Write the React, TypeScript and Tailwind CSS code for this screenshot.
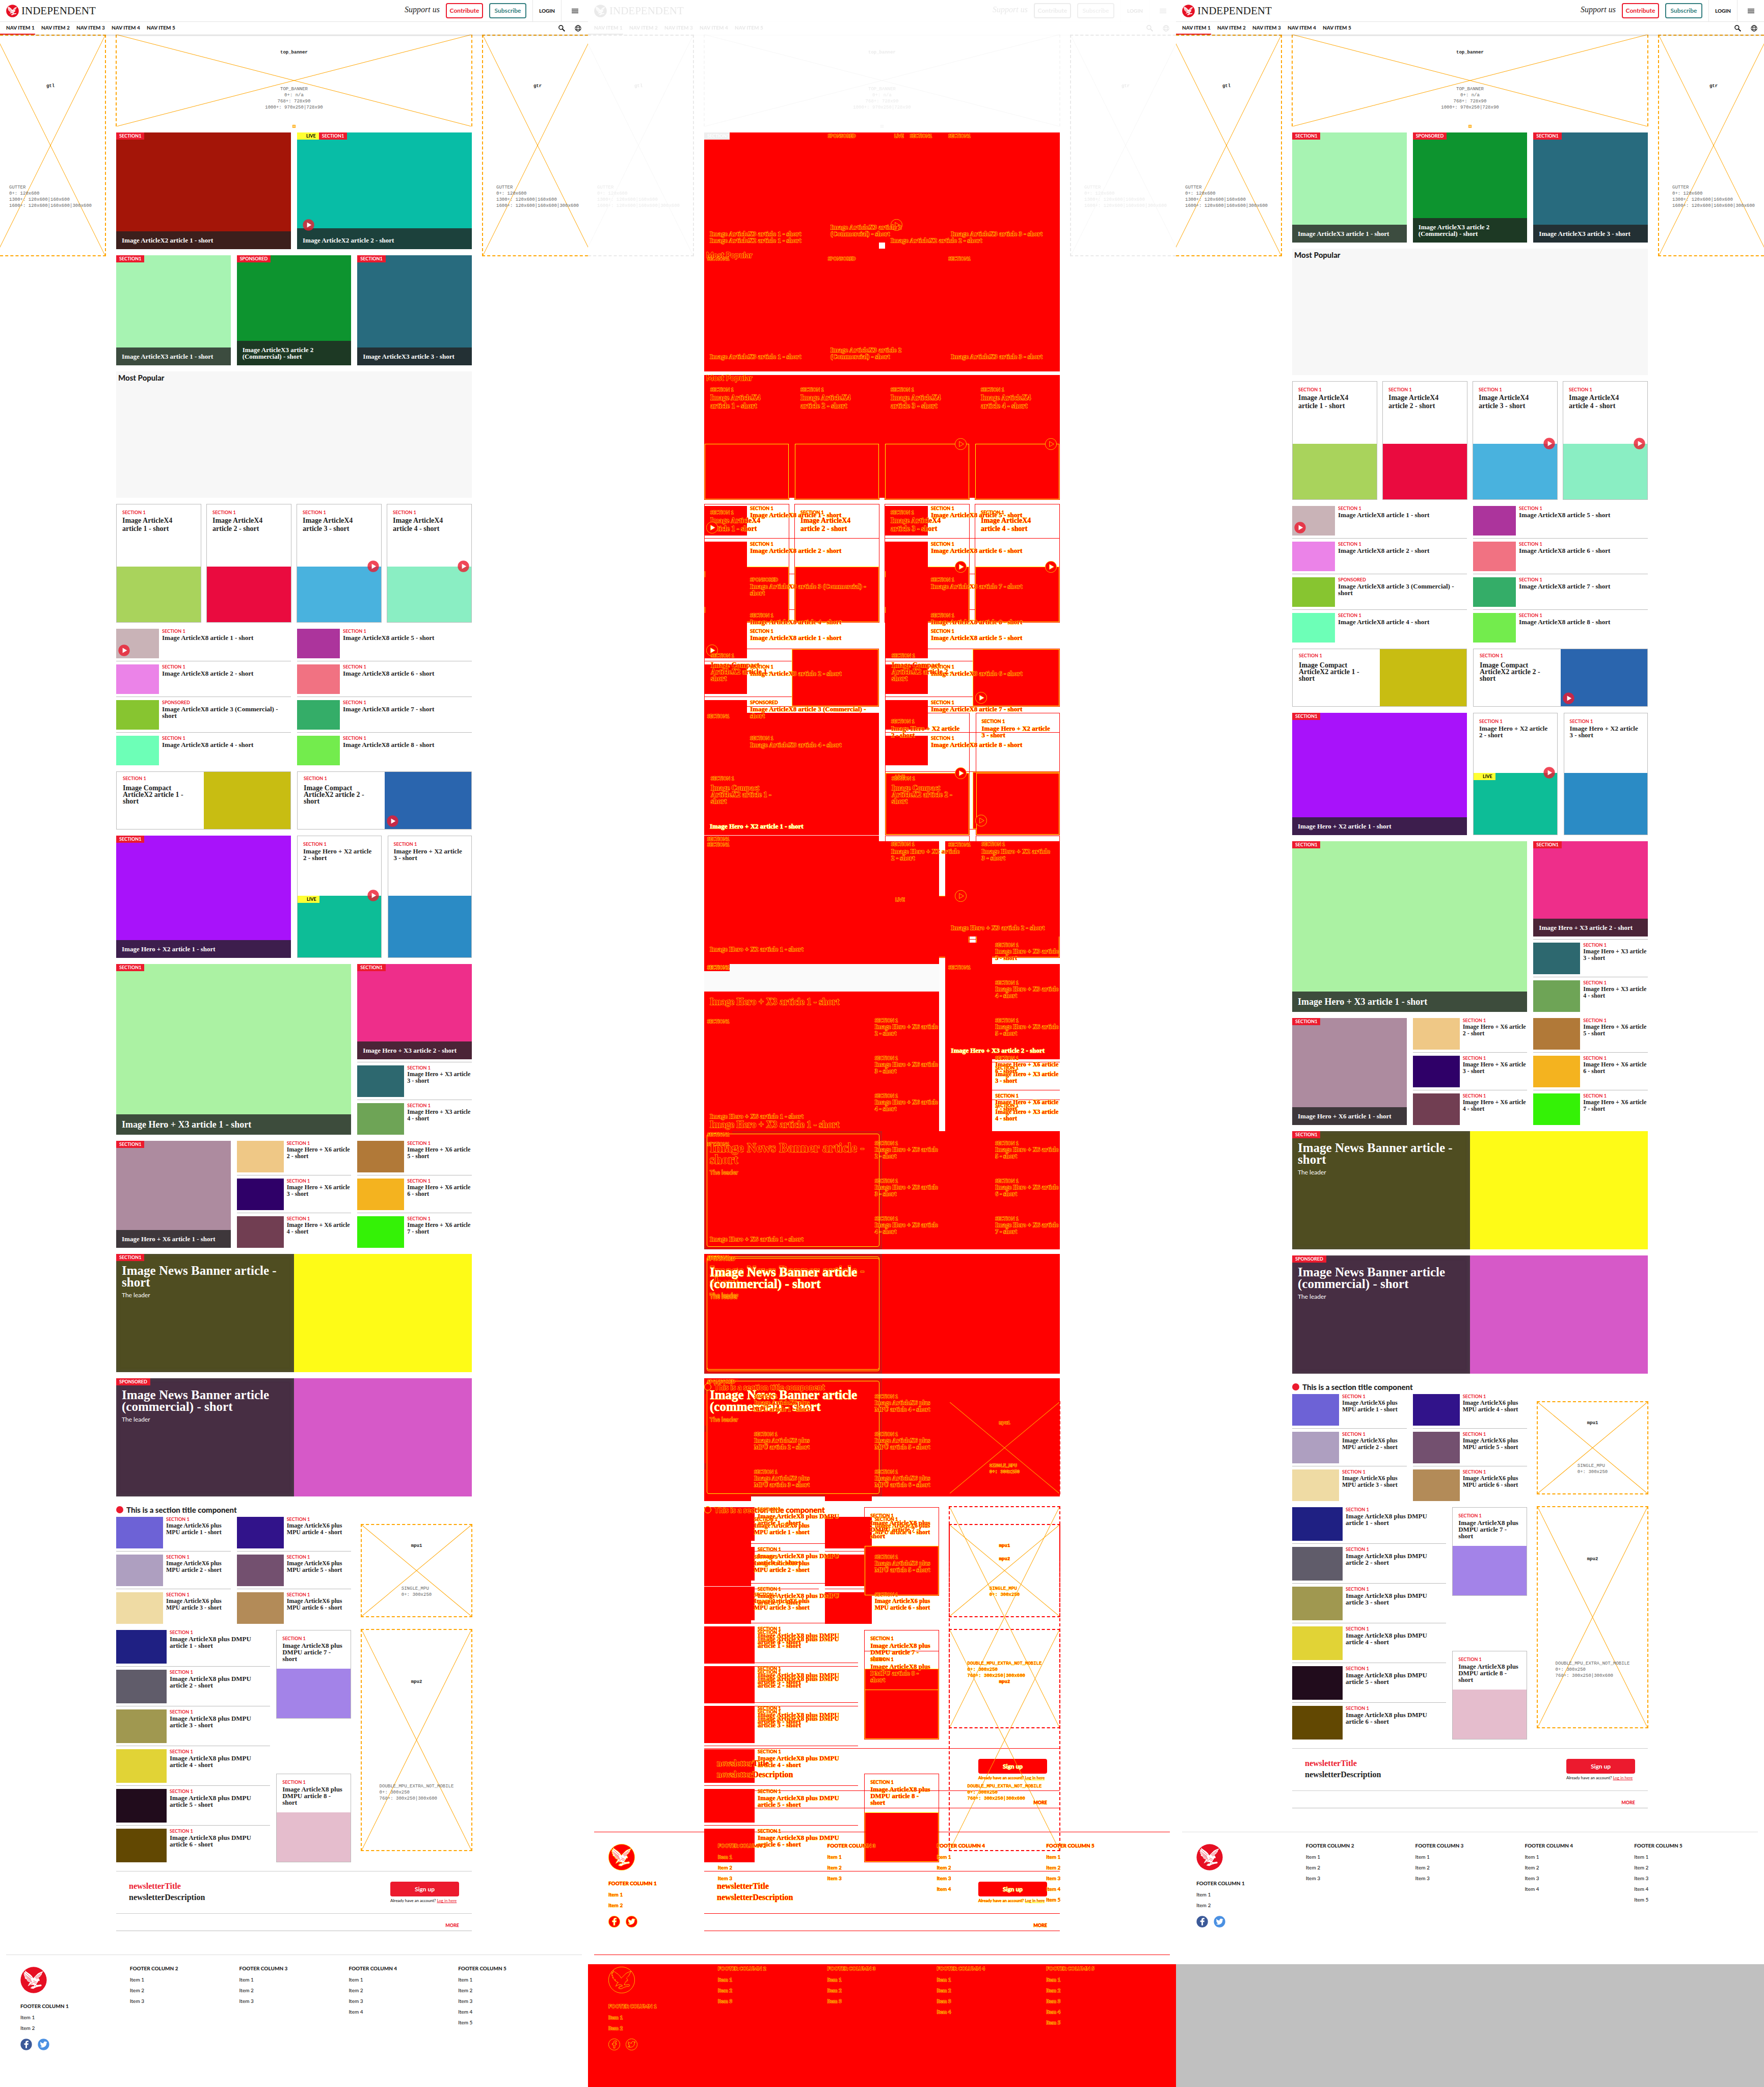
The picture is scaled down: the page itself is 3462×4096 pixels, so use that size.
import React, { createContext, useContext } from "react";

type Mode = "normal" | "diff";
type Version = "before" | "after";
const ModeContext = createContext<Mode>("normal");
const VersionContext = createContext<Version>("before");

const EAGLE =
  "M13 10 L16 13 L20 16 L26 20 L31 25 L35 31 L38 28 L43 23 L48 18 L54 15 L62 12 L59 17 L57 22 L53 27 L49 31 L51 33 L52.5 37 L51 39 L49 38 L47 42 L44 46 L43 49 L48 49.5 L56 48 L58 51 L56 53 L49 54 L42 56 L35 60 L29 59 L27 57 L31 55.5 L30 54 L38 52.5 L37 50 L33 49 L27 49 L20 53 L22 49 L24 45 L27 43 L21 40 L17 37 L20 36 L14 33 L11 29 L14 29 L9 24 L12 24 L8 19 L11 19 L9 14 L13 16 Z";
const FEATHERS =
  "M12 21 L28 33 M14 26 L29 36 M17 31 L30 39 M15 17 L30 30 M20 37 L32 42 M40 29 L57 17 M42 31 L55 22 M44 33 L52 28 M25 49 L33 45 M40 50 L42 53 M36 38 L44 42 M35 42 L42 45";

function Eagle({ className }: { className: string }) {
  const diff = useContext(ModeContext) === "diff";
  const version = useContext(VersionContext);
  const hollow = diff && version === "before";
  return (
    <svg viewBox="0 0 72 72" className={className} aria-hidden="true">
      <circle cx="36" cy="36" r="35.5" fill={diff ? "#ff0000" : "#e60f23"} stroke={diff ? "#ffff00" : "none"} />
      <path d={EAGLE} fill={hollow ? "#ff0000" : "#ffffff"} stroke={diff ? "#ffff00" : "none"} strokeLinejoin="round" />
      <path d={FEATHERS} fill="none" stroke={diff ? "#ff0000" : "#e60f23"} strokeWidth="1" strokeLinecap="round" />
    </svg>
  );
}

function Play({ className, hollowIn }: { className: string; hollowIn?: Version }) {
  const diff = useContext(ModeContext) === "diff";
  const version = useContext(VersionContext);
  const hollow = diff && version === hollowIn;
  return (
    <svg viewBox="0 0 32 32" className={"absolute z-10 size-[23px] " + className} aria-label="Play video">
      <circle cx="16" cy="16" r="15.5" fill={diff ? "#ff0000" : "#ec1a2e"} fillOpacity={diff ? 1 : 0.8} stroke={diff ? "#ffff00" : "none"} />
      <path d="M12 9 L24 16 L12 23 Z" fill={hollow ? "#ff0000" : "#ffffff"} stroke={diff ? "#ffff00" : "none"} />
    </svg>
  );
}

function Tag({ label, live }: { label?: string; live?: boolean }) {
  return (
    <div className="absolute left-0 top-0 flex h-[14px] font-[Lato] text-[9px] font-bold leading-[14px]">
      {live && (
        <span data-fill className="bg-[#ffff33] pl-[18px] pr-1.5 text-black">
          <span data-text>LIVE</span>
        </span>
      )}
      {label && (
        <span data-fill className="bg-[#ec1a2e] px-1.5 text-white">
          <span data-text>{label}</span>
        </span>
      )}
    </div>
  );
}

type Art = { title: string; color: string; label?: string; play?: boolean; live?: boolean; hollowIn?: Version };

function Cover({ a, className, big, pale }: { a: Art; className: string; big?: boolean; pale?: boolean }) {
  return (
    <article data-fill className={"relative flex flex-col justify-end " + a.color + " " + className}>
      <Tag label={a.label ?? "SECTION1"} live={a.live} />
      <div data-fill className={"relative bg-[#222222]/80 px-[11px] " + (a.play ? "pb-[11px] pt-[17px]" : "py-[11px]")}>
        {a.play && <Play className="-top-[18px] left-[11px]" hollowIn={a.hollowIn} />}
        <h3 className={"whitespace-pre-line font-bold text-white " + (big ? "text-[18px] leading-[18px]" : "text-[13px] leading-[13px]")}>
          <a href="#article" data-text={pale ? undefined : true} data-pale={pale ? true : undefined}>
            {a.title}
          </a>
        </h3>
      </div>
    </article>
  );
}

function Label({ text }: { text?: string }) {
  return (
    <p className="font-[Lato] text-[9px] font-bold leading-[9px] text-[#ec1a2e]">
      <span data-text>{text ?? "SECTION 1"}</span>
    </p>
  );
}

function Card({ a, className, textClass, gapClass, titleClass }: { a: Art; className: string; textClass: string; gapClass: string; titleClass: string }) {
  return (
    <article data-line className={"flex flex-col border border-[#bbbbbb] " + className}>
      <div className={"px-[11px] pt-[11px] " + textClass}>
        <Label text={a.label} />
        <h3 className={"whitespace-pre-line font-bold " + gapClass + " " + titleClass}>
          <a href="#article" data-text>{a.title}</a>
        </h3>
      </div>
      <div data-fill data-edge className={"relative flex-1 " + a.color}>
        {a.live && <Tag live />}
        {a.play && <Play className="-top-[12px] right-1" hollowIn={a.hollowIn} />}
      </div>
    </article>
  );
}

function Row({ a, imageClass, titleClass, last }: { a: Art; imageClass: string; titleClass: string; last?: boolean }) {
  return (
    <article data-line className={"flex gap-1.5 " + (last ? "" : "border-b border-[#bbbbbb] pb-[5px]")}>
      <div data-fill className={"relative shrink-0 " + imageClass + " " + a.color}>
        {a.play && <Play className="bottom-1 left-1" />}
      </div>
      <div>
        <Label text={a.label} />
        <h3 className={"mt-0.5 whitespace-pre font-bold leading-[13px] " + titleClass}>
          <a href="#article" data-text>{a.title}</a>
        </h3>
      </div>
    </article>
  );
}

function Rows({ items, imageClass, titleClass = "text-[12px]" }: { items: Art[]; imageClass: string; titleClass?: string }) {
  return (
    <div className="flex min-w-0 flex-col gap-1.5">
      {items.map((a, i) => (
        <Row key={a.title} a={a} imageClass={imageClass} titleClass={titleClass} last={i === items.length - 1} />
      ))}
    </div>
  );
}

function Ad({ name, lines, className, nameClass, linesClass }: { name: string; lines: string[]; className: string; nameClass: string; linesClass: string }) {
  return (
    <aside data-adline className={"relative border-dashed border-[#ffa500] font-['Liberation_Mono'] text-[9px] leading-3 " + className}>
      <svg className="absolute inset-0 size-full" preserveAspectRatio="none" viewBox="0 0 100 100" aria-hidden="true">
        <path d="M0 0 L100 100 M100 0 L0 100" stroke="#ffa500" strokeWidth="1" vectorEffect="non-scaling-stroke" fill="none" />
      </svg>
      <div className="relative flex flex-col items-center">
        <p className={"font-bold " + nameClass}><span data-text>{name}</span></p>
        <div className={"text-[#666666] " + linesClass}>
          {lines.map((l) => (
            <p key={l}><span data-text>{l}</span></p>
          ))}
        </div>
      </div>
    </aside>
  );
}

function Banner({ a, dark, pale }: { a: Art; dark: string; pale?: boolean }) {
  const diff = useContext(ModeContext) === "diff";
  return (
    <article className="relative grid h-[232px] grid-cols-2">
      <div data-fill className={"relative px-[11px] pt-[21px] text-white shadow-[inset_0_0_8px_rgba(80,80,80,0.6)] " + dark}>
        <Tag label={a.label} />
        {diff && <div className="absolute inset-[5px] z-[5] rounded border border-[#ffff00]" />}
        <h2 className="whitespace-pre-line text-[25px] font-bold leading-[23px]">
          <a href="#article" data-text={pale ? undefined : true} data-pale={pale ? true : undefined}>{a.title}</a>
        </h2>
        <p className="mt-[7px] font-[Lato] text-[12px] leading-[14px]"><span data-text>The leader</span></p>
      </div>
      <div data-fill className={a.color} />
    </article>
  );
}

const X2: Art[] = [
  { title: "Image ArticleX2 article 1 - short", color: "bg-[#a41508]" },
  { title: "Image ArticleX2 article 2 - short", color: "bg-[#08bda6]", live: true, play: true, hollowIn: "before" },
];
const X3: Art[] = [
  { title: "Image ArticleX3 article 1 - short", color: "bg-[#a7f3b2]" },
  { title: "Image ArticleX3 article 2\n(Commercial) - short", color: "bg-[#0d942f]", label: "SPONSORED" },
  { title: "Image ArticleX3 article 3 - short", color: "bg-[#286b7e]" },
];
const X4: Art[] = [
  { title: "Image ArticleX4\narticle 1 - short", color: "bg-[#a9d35c]" },
  { title: "Image ArticleX4\narticle 2 - short", color: "bg-[#ea0b3f]" },
  { title: "Image ArticleX4\narticle 3 - short", color: "bg-[#49b2de]", play: true, hollowIn: "after" },
  { title: "Image ArticleX4\narticle 4 - short", color: "bg-[#8aeec3]", play: true, hollowIn: "after" },
];
const X8A: Art[] = [
  { title: "Image ArticleX8 article 1 - short", color: "bg-[#c9b3b7]", play: true },
  { title: "Image ArticleX8 article 2 - short", color: "bg-[#eb83e8]" },
  { title: "Image ArticleX8 article 3 (Commercial) -\nshort", color: "bg-[#87c530]", label: "SPONSORED" },
  { title: "Image ArticleX8 article 4 - short", color: "bg-[#6dffb7]" },
];
const X8B: Art[] = [
  { title: "Image ArticleX8 article 5 - short", color: "bg-[#ac349c]" },
  { title: "Image ArticleX8 article 6 - short", color: "bg-[#f17282]" },
  { title: "Image ArticleX8 article 7 - short", color: "bg-[#34ad68]" },
  { title: "Image ArticleX8 article 8 - short", color: "bg-[#73ec4d]" },
];
const COMPACT: Art[] = [
  { title: "Image Compact\nArticleX2 article 1 -\nshort", color: "bg-[#c8bd12]" },
  { title: "Image Compact\nArticleX2 article 2 -\nshort", color: "bg-[#2a65ae]", play: true, hollowIn: "before" },
];
const HERO2: Art[] = [
  { title: "Image Hero + X2 article\n2 - short", color: "bg-[#0dbd97]", live: true, play: true, hollowIn: "before" },
  { title: "Image Hero + X2 article\n3 - short", color: "bg-[#2b8bc5]" },
];
const HERO3: Art[] = [
  { title: "Image Hero + X3 article\n3 - short", color: "bg-[#2d686f]" },
  { title: "Image Hero + X3 article\n4 - short", color: "bg-[#6ea456]" },
];
const HERO6A: Art[] = [
  { title: "Image Hero + X6 article\n2 - short", color: "bg-[#efc886]" },
  { title: "Image Hero + X6 article\n3 - short", color: "bg-[#2f0068]" },
  { title: "Image Hero + X6 article\n4 - short", color: "bg-[#713e52]" },
];
const HERO6B: Art[] = [
  { title: "Image Hero + X6 article\n5 - short", color: "bg-[#b17938]" },
  { title: "Image Hero + X6 article\n6 - short", color: "bg-[#f4b31f]" },
  { title: "Image Hero + X6 article\n7 - short", color: "bg-[#34f206]" },
];
const MPU6A: Art[] = [
  { title: "Image ArticleX6 plus\nMPU article 1 - short", color: "bg-[#6d62d6]" },
  { title: "Image ArticleX6 plus\nMPU article 2 - short", color: "bg-[#ae9fc0]" },
  { title: "Image ArticleX6 plus\nMPU article 3 - short", color: "bg-[#efdba4]" },
];
const MPU6B: Art[] = [
  { title: "Image ArticleX6 plus\nMPU article 4 - short", color: "bg-[#31138a]" },
  { title: "Image ArticleX6 plus\nMPU article 5 - short", color: "bg-[#73506f]" },
  { title: "Image ArticleX6 plus\nMPU article 6 - short", color: "bg-[#b38b58]" },
];
const DMPU: Art[] = [
  { title: "Image ArticleX8 plus DMPU\narticle 1 - short", color: "bg-[#1f2083]" },
  { title: "Image ArticleX8 plus DMPU\narticle 2 - short", color: "bg-[#605c6a]" },
  { title: "Image ArticleX8 plus DMPU\narticle 3 - short", color: "bg-[#a09850]" },
  { title: "Image ArticleX8 plus DMPU\narticle 4 - short", color: "bg-[#e1d336]" },
  { title: "Image ArticleX8 plus DMPU\narticle 5 - short", color: "bg-[#210c1c]" },
  { title: "Image ArticleX8 plus DMPU\narticle 6 - short", color: "bg-[#624802]" },
];
const DMPU_CARDS: Art[] = [
  { title: "Image ArticleX8 plus\nDMPU article 7 -\nshort", color: "bg-[#a383e8]" },
  { title: "Image ArticleX8 plus\nDMPU article 8 -\nshort", color: "bg-[#e5bdcd]" },
];

function Header() {
  return (
    <header className="relative z-20 bg-white font-[Lato] shadow-[0_1px_3px_rgba(0,0,0,0.25)]">
      <div className="flex h-[43px] items-stretch border-b border-[#e5e5e5]">
        <a href="#home" className="flex items-center gap-[5px] pl-3">
          <Eagle className="size-[25px]" />
          <span className="font-['Liberation_Serif'] text-[21px] leading-none text-[#1d1d1b]">INDEPENDENT</span>
        </a>
        <div className="ml-auto flex items-center gap-3 pr-3">
          <em className="pb-1 font-['Liberation_Serif'] text-[16px] italic">Support us</em>
          <button className="h-[30px] w-[73px] rounded border-2 border-[#ec1a2e] text-[12px] font-bold text-[#ec1a2e]">Contribute</button>
          <button className="h-[30px] w-[73px] rounded border-2 border-[#347f80] text-[12px] font-bold text-[#347f80]">Subscribe</button>
        </div>
        <button className="w-[57px] border-x border-[#e5e5e5] text-[10px] font-black">LOGIN</button>
        <button className="flex w-[52px] items-center justify-center" aria-label="Menu">
          <svg viewBox="0 0 18 12" className="h-[9px] w-[13px]"><path d="M0 1 H18 M0 6 H18 M0 11 H18" stroke="#000000" strokeWidth="2" /></svg>
        </button>
      </div>
      <nav className="flex h-[25px] text-[10px] font-black">
        {[1, 2, 3, 4, 5].map((n) => (
          <a key={n} href="#nav" className={"w-[69px] border-b-2 pl-3 leading-[23px] " + (n === 1 ? "border-[#ec1a2e]" : "border-transparent")}>
            NAV ITEM {n}
          </a>
        ))}
        <div className="ml-auto flex items-center gap-[19px] pr-[13px]">
          <button aria-label="Search">
            <svg viewBox="0 0 18 18" className="size-[13px]"><circle cx="6.7" cy="6.7" r="5.4" fill="none" stroke="#000000" strokeWidth="2" /><path d="M10.6 10.6 L17 17" stroke="#000000" strokeWidth="2.6" /></svg>
          </button>
          <button aria-label="Edition">
            <svg viewBox="0 0 18 18" className="size-[13px]" fill="none" stroke="#222222" strokeWidth="1.5"><circle cx="9" cy="9" r="7.8" /><ellipse cx="9" cy="9" rx="3.6" ry="7.8" /><path d="M1.8 6.3 H16.2 M1.8 11.7 H16.2" /></svg>
          </button>
        </div>
      </nav>
    </header>
  );
}

const GUTTER = ["GUTTER", "0+: 120x600", "1300+: 120x600|160x600", "1600+: 120x600|160x600|300x600"];

function Footer() {
  const diff = useContext(ModeContext) === "diff";
  const version = useContext(VersionContext);
  const mark = diff && version === "before" ? "#ff0000" : "#ffffff";
  const edge = diff ? "#ffff00" : "none";
  const columns = [2, 3, 3, 4, 5];
  return (
    <footer data-line className="relative mx-3 mt-[46px] grid grid-cols-5 border-t border-[#dddddd] px-7 pb-[72px] pt-[18px] font-[Lato]">
      {columns.map((count, i) => (
        <div key={i}>
          {i === 0 && <Eagle className="relative z-10 mb-[17px] mt-[5px] size-[52px]" />}
          <h4 className="text-[10px] font-black leading-4"><span data-text>FOOTER COLUMN {i + 1}</span></h4>
          <ul className="mt-1 text-[10px] font-medium leading-[21px]">
            {Array.from({ length: count }, (_, k) => (
              <li key={k}><a href="#item" data-text>Item {k + 1}</a></li>
            ))}
          </ul>
          {i === 0 && (
            <div className="relative z-10 mt-2.5 flex gap-[11px]">
              <a href="#facebook" aria-label="Facebook">
                <svg viewBox="0 0 32 32" className="size-[23px]">
                  <circle cx="16" cy="16" r="15.5" fill={diff ? "#ff0000" : "#3b5998"} stroke={edge} />
                  <path d="M14 26 V17 H10.500 V13 H14 V10.500 C14 7.500 16 6 18.500 6 H22 V9.500 H20 C18.500 9.500 18 10 18 11.200 V13 H22 L21.500 17 H18 V26 Z" fill={mark} stroke={edge} />
                </svg>
              </a>
              <a href="#twitter" aria-label="Twitter">
                <svg viewBox="0 0 32 32" className="size-[23px]">
                  <circle cx="16" cy="16" r="15.5" fill={diff ? "#ff0000" : "#4a90e2"} stroke={edge} />
                  <path d="M26 9.800 c-.8.300-1.500.5-2.300.6.8-.5 1.500-1.300 1.800-2.200-.8.500-1.700.8-2.600 1a4.100 4.100 0 0 0-7 3.700c-3.400-.2-6.400-1.800-8.400-4.300-1.100 1.900-.5 4.200 1.300 5.400-.7 0-1.300-.2-1.900-.5 0 2 1.400 3.700 3.300 4.100-.6.200-1.200.2-1.900.1.500 1.600 2 2.800 3.800 2.800A8.200 8.200 0 0 1 6 22.200 11.600 11.600 0 0 0 24 12 c.8-.6 1.500-1.300 2-2.200z" fill={mark} stroke={edge} />
                </svg>
              </a>
            </div>
          )}
        </div>
      ))}
    </footer>
  );
}

function Page({ version, ghost }: { version: Version; ghost?: string }) {
  const faded = ghost ?? "";
  const before = version === "before";
  return (
    <VersionContext.Provider value={version}>
      <div className="font-['Liberation_Serif'] text-[#222222]">
        <div className={faded}>
          <ModeContext.Provider value="normal"><Header /></ModeContext.Provider>
        </div>
        <div className="grid grid-cols-[228px_minmax(0,1fr)_228px]">
          <div className={faded}>
            <Ad name="gtl" lines={GUTTER} className="-ml-2.5 h-[435px] w-[218px] border-2" nameClass="pt-[93px]" linesClass="pt-[187px]" />
          </div>
          <main className="flex flex-col gap-3">
            <div className={"relative -mx-px " + faded}>
              <Ad name="top_banner" lines={["TOP_BANNER", "0+: n/a", "768+: 728x90", "1000+: 970x250|728x90"]} className="h-[180px] border-x-2" nameClass="pt-[29px]" linesClass="pt-[60px] text-center" />
              <span className="absolute -bottom-[3px] left-1/2 size-1.5 -translate-x-1/2 border border-[#ffa500] bg-[#ffd27a]" />
            </div>

            {before && (
              <section className="grid grid-cols-2 gap-3">
                {X2.map((a) => <Cover key={a.title} a={a} className="h-[229px]" />)}
              </section>
            )}
            <section className="grid grid-cols-3 gap-3">
              {X3.map((a) => <Cover key={a.title} a={a} className="h-[216px]" />)}
            </section>
            <section data-fill className="h-[248px] bg-[#f7f7f7] px-1 pt-[3px] font-[Lato]">
              <h2 className="text-[15px] font-black leading-[19px]"><span data-text>Most Popular</span></h2>
            </section>
            <section className="grid grid-cols-4 gap-2.5">
              {X4.map((a) => <Card key={a.title} a={a} className="h-[233px]" textClass="h-[122px]" gapClass="mt-1" titleClass="text-[14px] leading-4" />)}
            </section>
            <section className="grid grid-cols-2 gap-3">
              <Rows items={X8A} imageClass="h-[58px] w-[84px]" titleClass="text-[13px]" />
              <Rows items={X8B} imageClass="h-[58px] w-[84px]" titleClass="text-[13px]" />
            </section>
            <section className="grid grid-cols-2 gap-3">
              {COMPACT.map((a) => (
                <article key={a.title} data-line className="grid h-[114px] grid-cols-2 border border-[#bbbbbb]">
                  <div className="px-3 pt-2">
                    <Label />
                    <h3 className="mt-2 whitespace-pre-line text-[14px] font-bold leading-[13px]"><a href="#article" data-text>{a.title}</a></h3>
                  </div>
                  <div data-fill data-edge className={"relative " + a.color}>{a.play && <Play className="bottom-1 left-1" hollowIn={a.hollowIn} />}</div>
                </article>
              ))}
            </section>
            <section className="grid grid-cols-2 gap-3">
              <Cover a={{ title: "Image Hero + X2 article 1 - short", color: "bg-[#a812fa]" }} className="h-[240px]" pale={!before} />
              <div className="grid grid-cols-2 gap-3">
                {HERO2.map((a) => <Card key={a.title} a={a} className="" textClass="h-[117px]" gapClass="mt-[3px]" titleClass="text-[13px] leading-[13px]" />)}
              </div>
            </section>
            <section className="grid grid-cols-3 gap-3">
              <Cover a={{ title: "Image Hero + X3 article 1 - short", color: "bg-[#abf2a3]" }} className="col-span-2" big />
              <div>
                <Cover a={{ title: "Image Hero + X3 article 2 - short", color: "bg-[#ee2e8a]" }} className="h-[187px]" pale={before} />
                <div data-line className="mb-1.5 mt-[5px] border-t border-[#bbbbbb]" />
                <Rows items={HERO3} imageClass="h-[62px] w-[92px]" />
              </div>
            </section>
            <section className="grid grid-cols-3 gap-3">
              <Cover a={{ title: "Image Hero + X6 article 1 - short", color: "bg-[#ad8b9f]" }} className="" />
              <Rows items={HERO6A} imageClass="h-[62px] w-[92px]" />
              <Rows items={HERO6B} imageClass="h-[62px] w-[92px]" />
            </section>
            <Banner a={{ title: "Image News Banner article -\nshort", color: "bg-[#fefb17]", label: "SECTION1" }} dark="bg-[#4f4d21]" />
            <Banner a={{ title: "Image News Banner article\n(commercial) - short", color: "bg-[#d659c8]", label: "SPONSORED" }} dark="bg-[#472e43]" pale />
            <section>
              <div className="flex h-7 items-center gap-1.5 font-[Lato]">
                <span data-dot className="size-[14px] rounded-full bg-[#ec1a2e]" />
                <h2 className="text-[15px] font-black leading-[19px]"><span data-text>This is a section title component</span></h2>
              </div>
              <div className="grid grid-cols-3 gap-3">
                <Rows items={MPU6A} imageClass="h-[62px] w-[92px]" />
                <Rows items={MPU6B} imageClass="h-[62px] w-[92px]" />
                <Ad name="mpu1" lines={["SINGLE_MPU", "0+: 300x250"]} className="-mr-px mt-[14px] h-[183px] w-[219px] justify-self-end border-2" nameClass="pt-[35px]" linesClass="pt-[72px]" />
              </div>
            </section>
            <section className="grid grid-cols-3 gap-3">
              <div className="col-span-2 grid grid-cols-[302fr_147fr] gap-3">
                <Rows items={DMPU} imageClass="h-[66px] w-[99px]" titleClass="text-[13px]" />
                <div className="flex flex-col justify-between">
                  {DMPU_CARDS.map((a) => <Card key={a.title} a={a} className="h-[174px]" textClass="h-[75px]" gapClass="mt-[3px]" titleClass="text-[13px] leading-[13px]" />)}
                </div>
              </div>
              <Ad name="mpu2" lines={["DOUBLE_MPU_EXTRA_NOT_MOBILE", "0+: 300x250", "768+: 300x250|300x600"]} className="-mr-px -mt-0.5 h-[436px] w-[219px] justify-self-end border-2" nameClass="pt-[96px]" linesClass="pt-[193px]" />
            </section>
            <section className="mt-[5px]">
              <div data-line className="flex h-[84px] items-start justify-between border-y border-[#cccccc] px-[25px] pt-5">
                <div className="text-[16px] font-bold leading-[18px]">
                  <p className="pb-1 text-[#ec1a2e]"><span data-text>newsletterTitle</span></p>
                  <p><span data-text>newsletterDescription</span></p>
                </div>
                <div className="w-[135px] whitespace-nowrap font-[Lato]">
                  <button data-fill className="h-[29px] w-full rounded bg-[#ec1a2e] text-[12px] font-bold text-white"><span data-pale>Sign up</span></button>
                  <p className="text-[8px] font-medium leading-4"><span data-text>Already have an account? <a href="#login" className="text-[#ec1a2e] underline">Log in here</a></span></p>
                </div>
              </div>
              <div data-line className="flex h-[34px] justify-end border-b border-[#bbbbbb] px-[25px] pt-[17px] font-[Lato] text-[9px] font-black leading-3 text-[#ec1a2e]">
                <a href="#more" data-text>MORE</a>
              </div>
            </section>
          </main>
          <div className={faded}>
            <Ad name="gtr" lines={GUTTER} className="ml-5 h-[435px] w-[218px] border-2" nameClass="pt-[93px]" linesClass="pt-[187px]" />
          </div>
        </div>
        <Footer />
      </div>
    </VersionContext.Provider>
  );
}

function DiffPanel() {
  return (
    <ModeContext.Provider value="diff">
      <div className="relative isolate grid overflow-hidden bg-white [&_[data-adline]]:[&:not(.border-x-2)]:border-[#ff0000] [&_[data-dot]]:relative [&_[data-dot]]:z-10 [&_[data-dot]]:border [&_[data-dot]]:border-[#ffff00] [&_[data-dot]]:bg-[#ff0000]! [&_[data-edge]]:border [&_[data-edge]]:border-[#ffff00]! [&_[data-fill]]:bg-[#ff0000]! [&_[data-line]]:border-[#ff0000]! [&_[data-pale]]:relative [&_[data-pale]]:z-10 [&_[data-pale]]:text-white! [&_[data-pale]]:[-webkit-text-stroke:1px_#ffff00] [&_[data-pale]]:[paint-order:stroke] [&_[data-text]]:relative [&_[data-text]]:z-10 [&_[data-text]]:text-[#ff0000]! [&_[data-text]]:[-webkit-text-stroke:1px_#ffff00] [&_[data-text]]:[paint-order:stroke]">
        <div className="absolute inset-x-0 bottom-0 h-[241px] bg-[#ff0000]" />
        <div className="[grid-area:1/1]"><Page version="before" ghost="opacity-10 grayscale" /></div>
        <div className="self-start [grid-area:1/1]"><Page version="after" ghost="invisible" /></div>
        <div className="absolute left-[228px] right-[228px] top-[729px] h-[7px] bg-[#fefefe]" />
        <div className="absolute left-[228px] right-[464px] top-[1892px] h-[54px] bg-[#fafafa]">
          <div className="h-[14px] w-[50px] bg-[#ff0000] px-1.5 font-[Lato] text-[9px] font-bold leading-[14px]"><span data-text>SECTION1</span></div>
        </div>
        <div className="absolute left-[228px] top-[260px] z-20 h-[14px] w-[50px] bg-[#eeeeee] px-1.5 font-[Lato] text-[9px] font-bold leading-[14px] text-white">SECTION1</div>
      </div>
    </ModeContext.Provider>
  );
}

export default function App() {
  return (
    <div className="grid grid-cols-3 bg-[#c0c0c0]">
      <div className="overflow-hidden bg-white"><Page version="before" /></div>
      <DiffPanel />
      <div className="self-start overflow-hidden bg-white"><Page version="after" /></div>
    </div>
  );
}
